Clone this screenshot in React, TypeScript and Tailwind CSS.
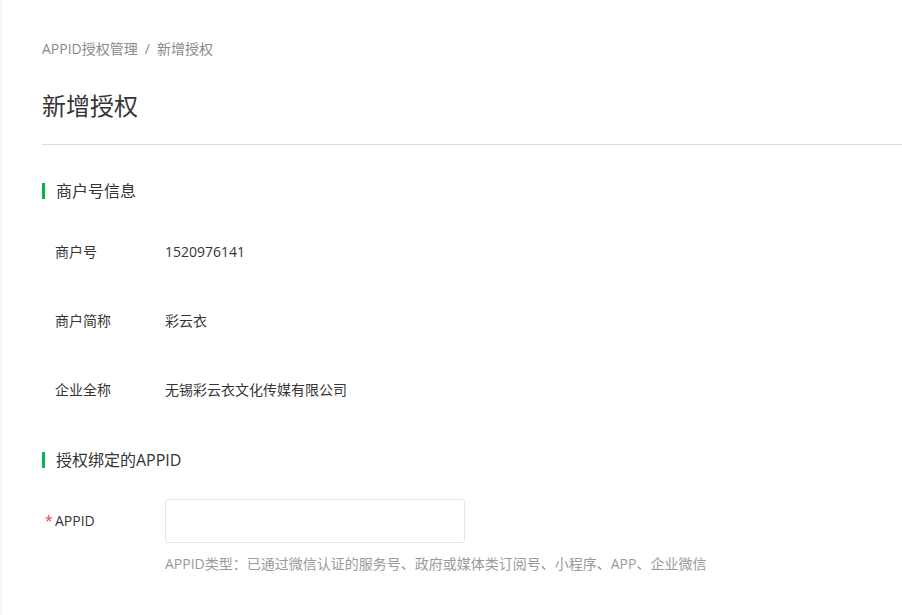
const FONT = "font-['Open_Sans','Noto_Sans_CJK_SC',sans-serif]";

const merchant = [
  { label: '商户号', value: '1520976141' },
  { label: '商户简称', value: '彩云衣' },
  { label: '企业全称', value: '无锡彩云衣文化传媒有限公司' },
];

function SectionTitle({ children }: { children: string }) {
  return (
    <div className="flex items-center h-6">
      <span className="w-[3px] h-4 bg-[#07b44f]" />
      <span className="ml-[11px] text-[16px] leading-6 text-[#353535]">{children}</span>
    </div>
  );
}

export default function App() {
  return (
    <div className={`flex min-h-screen bg-white ${FONT}`}>
      <div className="w-[2px] shrink-0 bg-[#f6f6f9]" />
      <main className="flex-1 pl-[40px]">
        <nav className="mt-[39px] h-5 text-[14px] leading-5 text-[#8a8a8a]">
          APPID授权管理
          <span className="mx-[7px]">/</span>
          新增授权
        </nav>
        <h1 className="mt-[31px] text-[24px] leading-8 text-[#353535]">新增授权</h1>
        <div className="mt-[22px] border-b border-[#dcdce8]" />

        <section className="mt-[34px]">
          <SectionTitle>商户号信息</SectionTitle>
          <div className="mt-[39px] flex flex-col gap-[49px]">
            {merchant.map((row) => (
              <div key={row.label} className="flex h-5 text-[14px] leading-5 text-[#353535]">
                <span className="w-[123px] pl-[13px]">{row.label}</span>
                <span>{row.value}</span>
              </div>
            ))}
          </div>
        </section>

        <section className="mt-[48px]">
          <SectionTitle>授权绑定的APPID</SectionTitle>
          <div className="mt-[27px] flex items-center text-[14px] text-[#353535]">
            <label className="w-[123px] pl-[13px] leading-5">
              <span className="inline-block w-[10px] -ml-[10px] text-[#e64340]">*</span>
              APPID
            </label>
            <input
              type="text"
              className="w-[300px] h-[44px] rounded-[3px] border border-[#e4e4ee] px-3 outline-none"
            />
          </div>
          <p className="mt-[11px] ml-[123px] text-[14px] leading-5 text-[#9a9a9a]">
            APPID类型：已通过微信认证的服务号、政府或媒体类订阅号、小程序、APP、企业微信
          </p>
        </section>
      </main>
    </div>
  );
}
